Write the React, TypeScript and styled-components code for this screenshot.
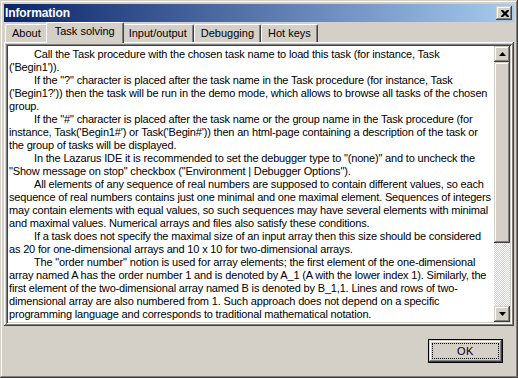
import React from 'react';
import styled, { createGlobalStyle } from 'styled-components';

const GlobalStyle = createGlobalStyle`
	html, body {
		margin: 0;
		padding: 0;
		background: #d4d0c8;
	}
	body {
		font-family: "Liberation Sans", Arial, sans-serif;
		font-size: 11px;
		color: #000;
	}
`;

interface Line {
	text: string;
	indent?: boolean;
}

const lines: Line[] = [
	{ text: 'Call the Task procedure with the chosen task name to load this task (for instance, Task', indent: true },
	{ text: "('Begin1'))." },
	{ text: 'If the "?" character is placed after the task name in the Task procedure (for instance, Task', indent: true },
	{ text: "('Begin1?')) then the task will be run in the demo mode, which allows to browse all tasks of the chosen" },
	{ text: 'group.' },
	{ text: 'If the "#" character is placed after the task name or the group name in the Task procedure (for', indent: true },
	{ text: "instance, Task('Begin1#') or Task('Begin#')) then an html-page containing a description of the task or" },
	{ text: 'the group of tasks will be displayed.' },
	{ text: 'In the Lazarus IDE it is recommended to set the debugger type to "(none)" and to uncheck the', indent: true },
	{ text: '"Show message on stop" checkbox ("Environment | Debugger Options").' },
	{ text: 'All elements of any sequence of real numbers are supposed to contain different values, so each', indent: true },
	{ text: 'sequence of real numbers contains just one minimal and one maximal element. Sequences of integers' },
	{ text: 'may contain elements with equal values, so such sequences may have several elements with minimal' },
	{ text: 'and maximal values. Numerical arrays and files also satisfy these conditions.' },
	{ text: 'If a task does not specify the maximal size of an input array then this size should be considered', indent: true },
	{ text: 'as 20 for one-dimensional arrays and 10 x 10 for two-dimensional arrays.' },
	{ text: 'The "order number" notion is used for array elements; the first element of the one-dimensional', indent: true },
	{ text: 'array named A has the order number 1 and is denoted by A_1 (A with the lower index 1). Similarly, the' },
	{ text: 'first element of the two-dimensional array named B is denoted by B_1,1. Lines and rows of two-' },
	{ text: 'dimensional array are also numbered from 1. Such approach does not depend on a specific' },
	{ text: 'programming language and corresponds to traditional mathematical notation.' },
];

const tabs = ['About', 'Task solving', 'Input/output', 'Debugging', 'Hot keys'];

const App = () => {
	return (
		<>
			<GlobalStyle />
			<Window>
				<TitleBar>
					<Title>Information</Title>
					<CloseButton>
						<svg width="8" height="7" viewBox="0 0 8 7">
							<path d="M0 0h2l2 2 2-2h2v1L5.5 3.5 8 6v1H6L4 5 2 7H0V6l2.5-2.5L0 1z" fill="#000" />
						</svg>
					</CloseButton>
				</TitleBar>
				<TabStrip>
					{tabs.map((t) => (
						<Tab key={t} $active={t === 'Task solving'}>
							{t}
						</Tab>
					))}
				</TabStrip>
				<TabSheet>
					<Memo>
						<MemoText>
							{lines.map((l, i) => (
								<TextLine key={i} $indent={l.indent}>
									{l.text}
								</TextLine>
							))}
						</MemoText>
						<ScrollBar>
							<ScrollButton>
								<svg width="7" height="4" viewBox="0 0 7 4">
									<path d="M3.5 0L7 4H0z" fill="#000" />
								</svg>
							</ScrollButton>
							<Thumb />
							<Track />
							<ScrollButton>
								<svg width="7" height="4" viewBox="0 0 7 4">
									<path d="M0 0h7L3.5 4z" fill="#000" />
								</svg>
							</ScrollButton>
						</ScrollBar>
					</Memo>
				</TabSheet>
				<Footer>
					<OkButton>
						<Focus>OK</Focus>
					</OkButton>
				</Footer>
			</Window>
		</>
	);
};

export default App;

const raised = `
	box-shadow: inset -1px -1px #404040, inset 1px 1px #d4d0c8, inset -2px -2px #808080, inset 2px 2px #ffffff;
`;

const Window = styled.div`
	width: 518px;
	height: 378px;
	box-sizing: border-box;
	padding: 4px;
	display: flex;
	flex-direction: column;
	background: #d4d0c8;
	${raised}
`;

const TitleBar = styled.div`
	height: 18px;
	flex-shrink: 0;
	display: flex;
	align-items: center;
	justify-content: space-between;
	padding: 0 2px 0 1px;
	background: linear-gradient(to right, #0a246a, #a6caf0);
`;

const Title = styled.div`
	color: #fff;
	font-weight: bold;
	font-size: 12px;
	letter-spacing: -0.1px;
`;

const CloseButton = styled.div`
	width: 16px;
	height: 14px;
	box-sizing: border-box;
	display: flex;
	align-items: center;
	justify-content: center;
	padding-left: 1px;
	background: #d4d0c8;
	${raised}
`;

const TabStrip = styled.div`
	height: 20px;
	flex-shrink: 0;
	display: flex;
	align-items: flex-end;
	padding-left: 1px;
`;

const Tab = styled.div<{ $active?: boolean }>`
	position: relative;
	z-index: ${(p) => (p.$active ? 1 : 0)};
	height: ${(p) => (p.$active ? '21px' : '18px')};
	margin: ${(p) => (p.$active ? '0 -2px -1px' : '0')};
	padding: ${(p) => (p.$active ? '0 8px' : '0 6px')};
	box-sizing: border-box;
	line-height: ${(p) => (p.$active ? '16px' : '17px')};
	background: #d4d0c8;
	border-top: 1px solid #fff;
	border-left: 1px solid #fff;
	border-right: 1px solid #404040;
	border-top-left-radius: 2px;
	border-top-right-radius: 2px;
	box-shadow: inset -1px 0 #808080;
	white-space: nowrap;
`;

const TabSheet = styled.div`
	height: 284px;
	flex-shrink: 0;
	box-sizing: border-box;
	padding: 2px 2px 2px 2px;
	display: flex;
	box-shadow: inset -1px -1px #404040, inset 1px 1px #ffffff, inset -2px -2px #808080;
`;

const Memo = styled.div`
	flex: 1;
	display: flex;
	padding: 2px;
	background: #fff;
	box-shadow: inset 1px 1px #808080, inset -1px -1px #ffffff, inset 2px 2px #404040, inset -2px -2px #d4d0c8;
`;

const MemoText = styled.div`
	flex: 1;
	overflow: hidden;
	padding: 2px 0 0 1px;
`;

const TextLine = styled.div<{ $indent?: boolean }>`
	height: 13px;
	line-height: 13px;
	white-space: pre;
	letter-spacing: -0.17px;
	padding-left: ${(p) => (p.$indent ? '25px' : '0')};
`;

const ScrollBar = styled.div`
	width: 16px;
	display: flex;
	flex-direction: column;
`;

const ScrollButton = styled.div`
	height: 16px;
	flex-shrink: 0;
	display: flex;
	align-items: center;
	justify-content: center;
	background: #d4d0c8;
	${raised}
`;

const Thumb = styled.div`
	height: 181px;
	flex-shrink: 0;
	background: #d4d0c8;
	${raised}
`;

const Track = styled.div`
	flex: 1;
	background-image: repeating-conic-gradient(#ffffff 0 25%, #d4d0c8 0 50%);
	background-size: 2px 2px;
`;

const Footer = styled.div`
	flex: 1;
	display: flex;
	justify-content: flex-end;
	align-items: flex-start;
	padding: 13px 11px 0 0;
`;

const OkButton = styled.div`
	width: 75px;
	height: 24px;
	box-sizing: border-box;
	border: 1px solid #000;
	padding: 3px;
	background: #d4d0c8;
	${raised}
	display: flex;
`;

const Focus = styled.div`
	flex: 1;
	border: 1px dotted #000;
	display: flex;
	align-items: center;
	justify-content: center;
	font-size: 11px;
	letter-spacing: 0.5px;
`;
